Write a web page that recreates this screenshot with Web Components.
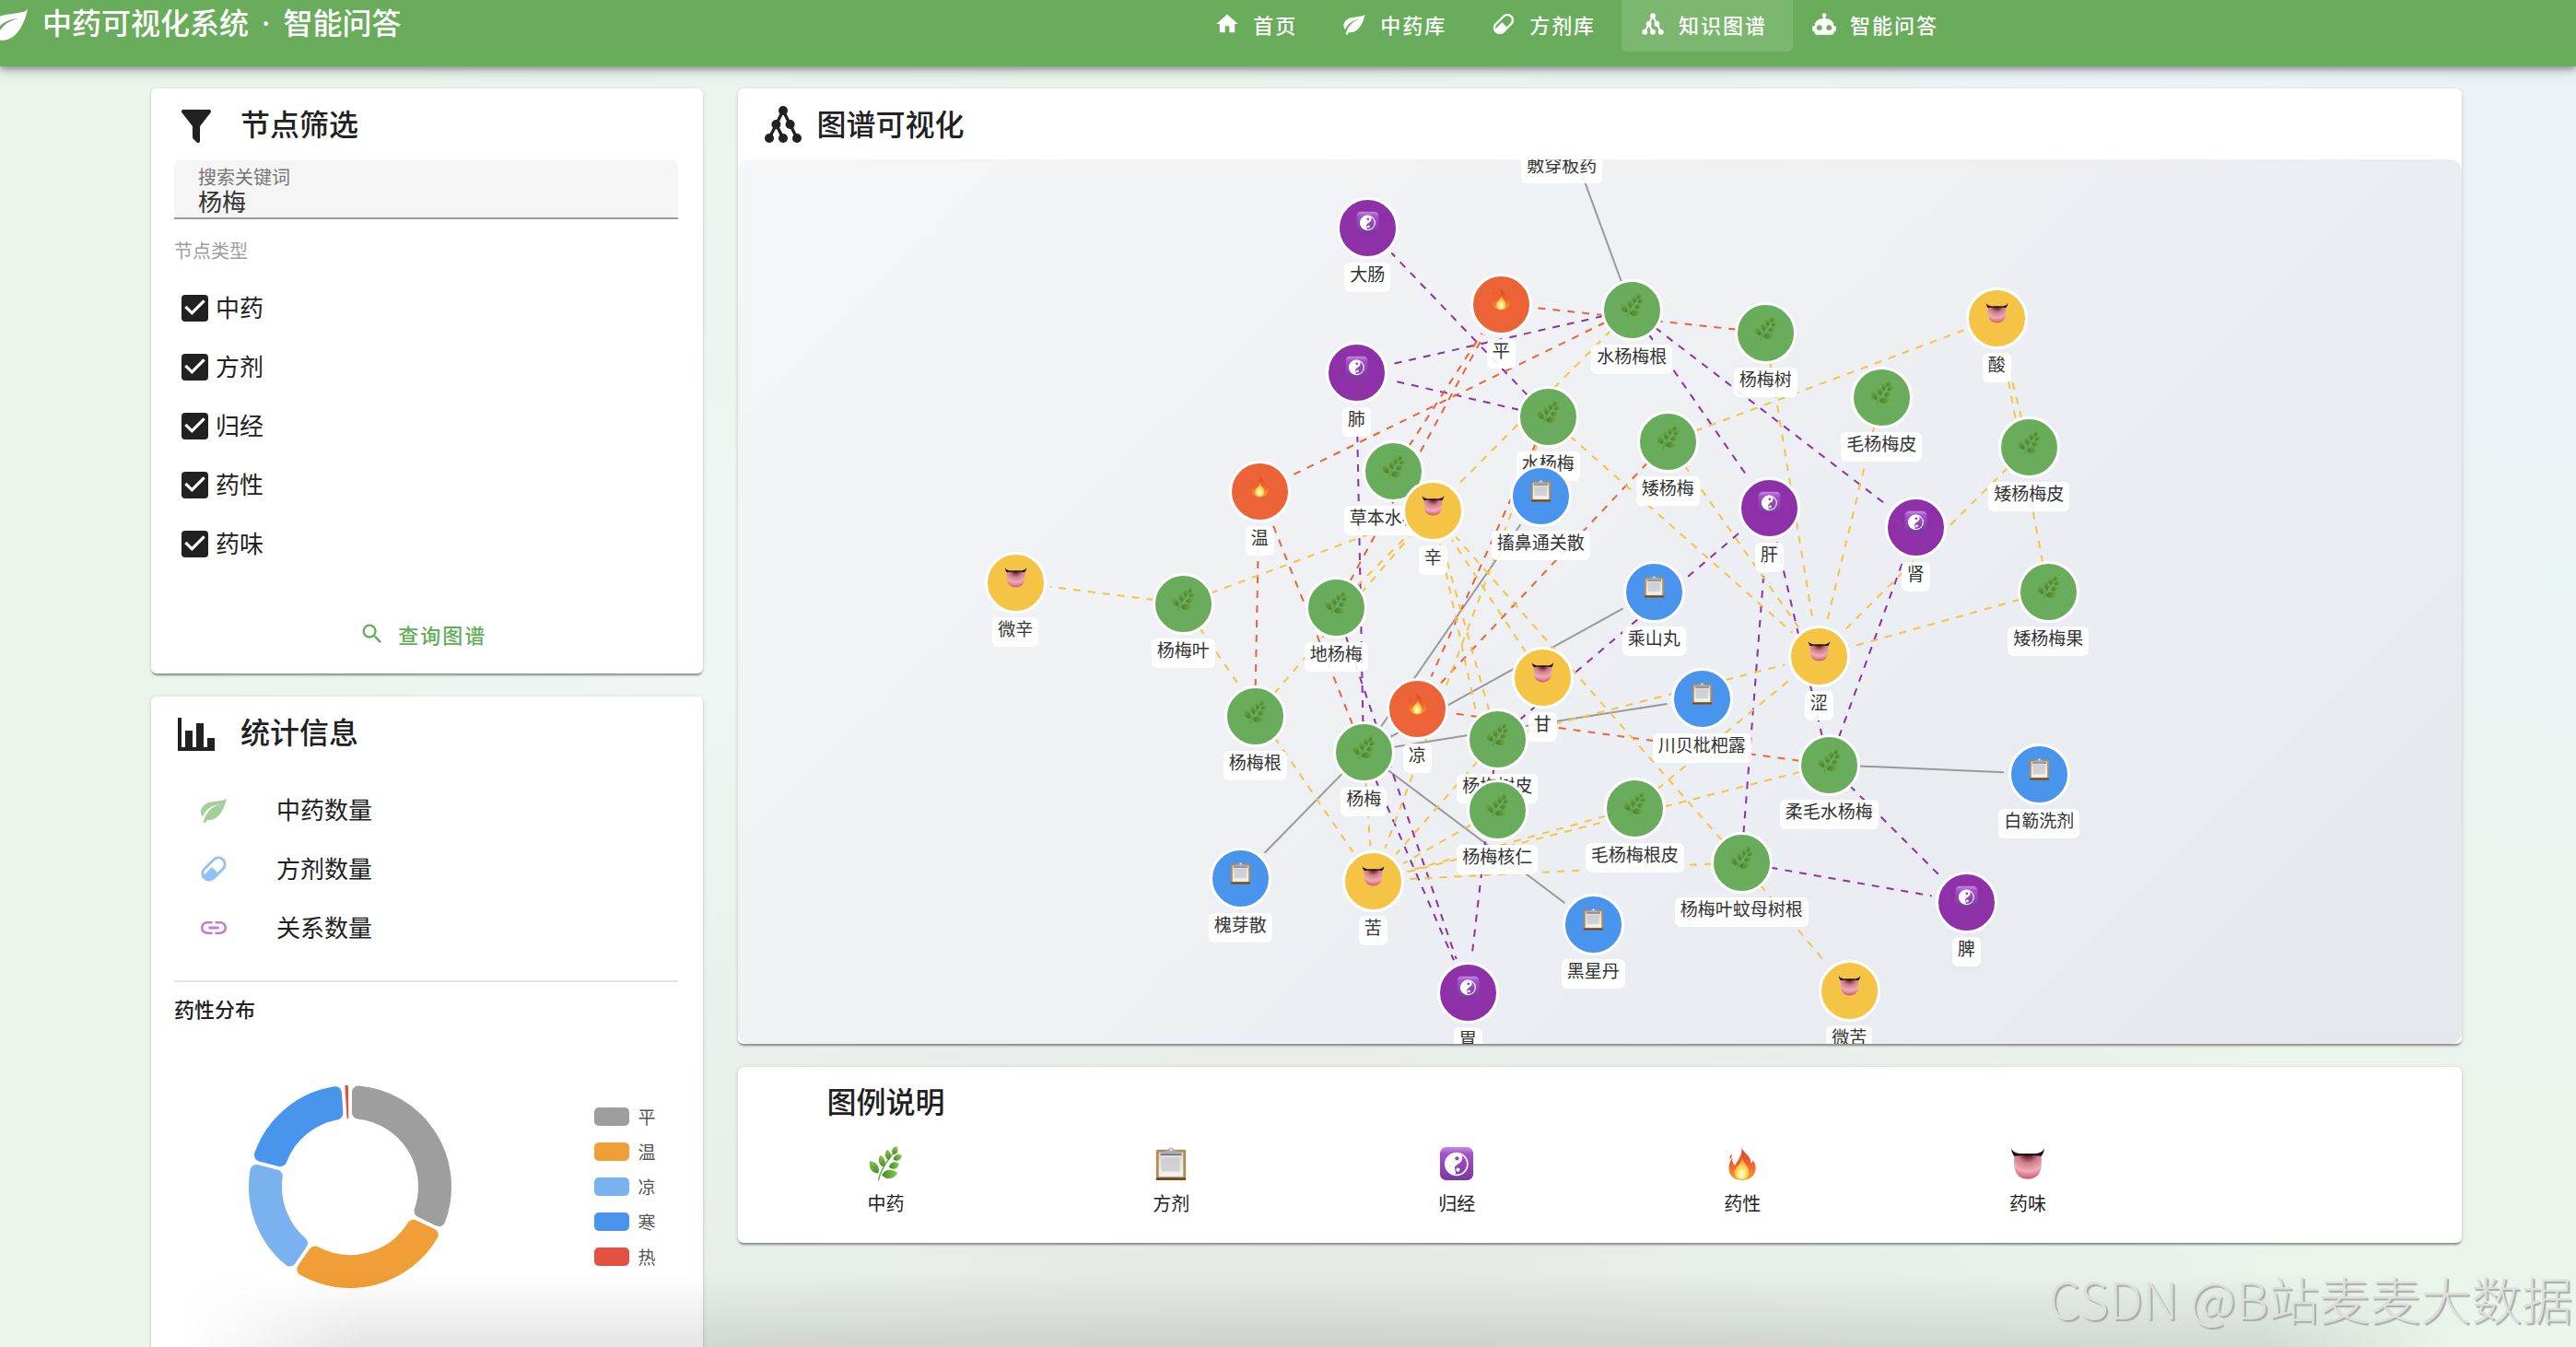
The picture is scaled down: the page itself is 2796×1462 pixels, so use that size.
<!DOCTYPE html>
<html lang="zh-CN">
<head>
<meta charset="utf-8">
<title>中药可视化系统 · 知识图谱</title>
<style>
  html, body { height: 100%; }
  body { margin: 0; font-family: "Noto Sans CJK SC", sans-serif; color: #212121; }
</style>
</head>
<body>
<tcm-app></tcm-app>

<script>
const ICONS = {
  home: 'M10,20V14H14V20H19V12H22L12,3L2,12H5V20H10Z',
  leaf: 'M17,8C8,10 5.9,16.17 3.82,21.34L5.71,22L6.66,19.7C7.14,19.87 7.64,20 8,20C19,20 22,3 22,3C21,5 14,5.25 9,6.25C4,7.25 2,11.5 2,13.5C2,15.5 3.75,17.25 3.75,17.25C7,8 17,8 17,8Z',
  pill: 'M4.22,11.29L11.29,4.22C13.64,1.88 17.43,1.88 19.78,4.22C22.12,6.56 22.12,10.36 19.78,12.71L12.71,19.78C10.36,22.12 6.56,22.12 4.22,19.78C1.88,17.43 1.88,13.64 4.22,11.29M5.64,12.71C4.59,13.75 4.24,15.24 4.6,16.57L10.59,10.59L14.83,14.83L18.36,11.29C19.93,9.73 19.93,7.2 18.36,5.64C16.8,4.07 14.27,4.07 12.71,5.64L5.64,12.71Z',
  robot: 'M12,2A2,2 0 0,1 14,4C14,4.74 13.6,5.39 13,5.73V7H14A7,7 0 0,1 21,14H22A1,1 0 0,1 23,15V18A1,1 0 0,1 22,19H21V20A2,2 0 0,1 19,22H5A2,2 0 0,1 3,20V19H2A1,1 0 0,1 1,18V15A1,1 0 0,1 2,14H3A7,7 0 0,1 10,7H11V5.73C10.4,5.39 10,4.74 10,4A2,2 0 0,1 12,2M7.5,13A2.5,2.5 0 0,0 5,15.5A2.5,2.5 0 0,0 7.5,18A2.5,2.5 0 0,0 10,15.5A2.5,2.5 0 0,0 7.5,13M16.5,13A2.5,2.5 0 0,0 14,15.5A2.5,2.5 0 0,0 16.5,18A2.5,2.5 0 0,0 19,15.5A2.5,2.5 0 0,0 16.5,13Z',
  filter: 'M14,12V19.88C14.04,20.18 13.94,20.5 13.71,20.71C13.32,21.1 12.69,21.1 12.3,20.71L10.29,18.7C10.06,18.47 9.96,18.16 10,17.87V12H9.97L4.21,4.62C3.87,4.19 3.95,3.56 4.38,3.22C4.57,3.08 4.78,3 5,3H19C19.22,3 19.43,3.08 19.62,3.22C20.05,3.56 20.13,4.19 19.79,4.62L14.03,12H14Z',
  chart: 'M22,21H2V3H4V19H6V10H10V19H12V6H16V19H18V14H22V21Z',
  link: 'M3.9,12C3.9,10.29 5.29,8.9 7,8.9H11V7H7A5,5 0 0,0 2,12A5,5 0 0,0 7,17H11V15.1H7C5.29,15.1 3.9,13.71 3.9,12M8,13H16V11H8V13M17,7H13V8.9H17C18.71,8.9 20.1,10.29 20.1,12C20.1,13.71 18.71,15.1 17,15.1H13V17H17A5,5 0 0,0 22,12A5,5 0 0,0 17,7Z',
  search: 'M9.5,3A6.5,6.5 0 0,1 16,9.5C16,11.11 15.41,12.59 14.44,13.73L14.71,14H15.5L20.5,19L19,20.5L14,15.5V14.71L13.73,14.44C12.59,15.41 11.11,16 9.5,16A6.5,6.5 0 0,1 3,9.5A6.5,6.5 0 0,1 9.5,3M9.5,5C7,5 5,7 5,9.5C5,12 7,14 9.5,14C12,14 14,12 14,9.5C14,7 12,5 9.5,5Z'
};
const TREE = `<g fill="currentColor"><circle cx="12" cy="4.5" r="2.5"/><circle cx="8.2" cy="12" r="2.5"/><circle cx="15.8" cy="12" r="2.5"/><circle cx="4.5" cy="19.5" r="2.5"/><circle cx="12" cy="19.5" r="2.5"/><circle cx="19.5" cy="19.5" r="2.5"/></g><path d="M12 4.5L4.5 19.5M12 4.5L19.5 19.5M8.2 12L12 19.5" fill="none" stroke="currentColor" stroke-width="1.7"/>`;

const leaf = (x, y, rx, ry, a) =>
  `<path transform="translate(${x} ${y}) rotate(${a})" d="M0 ${-ry}C${rx * 1.5} ${-ry * .4} ${rx * 1.4} ${ry * .6} 0 ${ry}C${-rx * 1.4} ${ry * .6} ${-rx * 1.5} ${-ry * .4} 0 ${-ry}Z" fill="url(#g)"/>`;
const EMOJI = {
  herb: `<linearGradient id="g" x1="0" y1="0" x2="0" y2="1"><stop offset="0" stop-color="#8fcb4b"/><stop offset="1" stop-color="#43892f"/></linearGradient>
    <path d="M12 39C15 26 22 16 30 7" fill="none" stroke="#6fae42" stroke-width="1.6"/>
    ${leaf(31, 5, 3, 5, 22)}${leaf(23, 10, 3, 6, -8)}${leaf(34, 13, 3, 5.5, 62)}${leaf(16, 17, 3.2, 7, -16)}${leaf(30, 22, 3.6, 6, 72)}${leaf(7, 24, 4, 8.5, -34)}${leaf(25, 32, 4.6, 9, 84)}`,
  clip: `<linearGradient id="g" x1="0" y1="0" x2="0" y2="1"><stop offset="0" stop-color="#d9dadc"/><stop offset="1" stop-color="#f3f3f3"/></linearGradient>
    <rect x="3" y="4" width="34" height="35" rx="2" fill="#b48a4e"/><rect x="3" y="36" width="34" height="3" rx="1" fill="#6d4b20"/>
    <rect x="6" y="7" width="28" height="28" fill="url(#g)"/><rect x="9" y="13" width="21" height="16" fill="#c6c7c9" opacity=".7"/>
    <path d="M8 9V6.500L15 5.500C17 5 17 1.500 20 1.500S23 5 25 5.500L32 6.500V9Z" fill="#a9aeb4"/><rect x="8" y="9" width="24" height="1.500" fill="#5f6367"/><circle cx="20" cy="4" r="1.200" fill="#fff"/>`,
  yin: `<linearGradient id="g" x1="0" y1="0" x2="0" y2="1"><stop offset="0" stop-color="#c88be6"/><stop offset=".2" stop-color="#a552cc"/><stop offset="1" stop-color="#7c379f"/></linearGradient>
    <rect x="1" y="1" width="38" height="38" rx="7" fill="url(#g)"/><circle cx="20" cy="20.500" r="12.500" fill="none" stroke="#fff" stroke-width="1.800"/>
    <path d="M22 8A12.500 12.500 0 1 0 16 32.500C22 32 17 27 18 24C20 20 26 20 26.500 14C26.600 10.500 24.500 8.500 22 8Z" fill="#fff"/>
    <circle cx="20.500" cy="14" r="2.200" fill="#8e44b4"/><circle cx="21.500" cy="27" r="2.200" fill="#fff"/>`,
  fire: `<linearGradient id="g" x1="0" y1="0" x2="0" y2="1"><stop offset="0" stop-color="#dd3f2c"/><stop offset=".6" stop-color="#f06a2e"/><stop offset="1" stop-color="#f5a13a"/></linearGradient>
    <radialGradient id="h" cx=".5" cy=".75" r=".6"><stop offset="0" stop-color="#fffef0"/><stop offset=".5" stop-color="#fbe25a"/><stop offset="1" stop-color="#f79b38"/></radialGradient>
    <path d="M19 1C20 7 30 10 30 19C31 20 32 18 32 16C35 19 36 24 35 28C34 35 27 39 20 39C12 39 6 35 5 28C4 22 6 17 9 13C8 18 10 21 12 22C14 16 21 12 19 1Z" fill="url(#g)"/>
    <path d="M8 9C9 11 8 13 6 15C5 12 7 11 8 9Z" fill="#e4543a"/>
    <path d="M20 13C21 20 27 21 28 29C28 35 25 38 20 38C15 38 11 35 11 30C11 24 19 22 20 13Z" fill="url(#h)"/>`,
  tongue: `<radialGradient id="g" cx=".5" cy="0" r="1"><stop offset="0" stop-color="#3a1518"/><stop offset=".15" stop-color="#6d2f38"/><stop offset=".38" stop-color="#d07c89"/><stop offset=".7" stop-color="#efabb6"/><stop offset="1" stop-color="#cf5870"/></radialGradient>
    <path d="M4.500 10C3.500 25 5 37.500 20 37.500S36.500 25 35.500 10C28 8 12 8 4.500 10Z" fill="url(#g)"/>
    <path d="M1 3C4 8 10 9 20 9S36 8 39 3C38 8 37 10 35 11.500C30 10 24 11 20 11S10 10 5 11.500C3 10 2 8 1 3Z" fill="#1b1214"/>`
};

const define = (name, render) => customElements.define(name, class extends HTMLElement {
  connectedCallback() {
    if (this.shadowRoot) return;
    this.attachShadow({ mode: 'open' }).innerHTML = render(this);
  }
});

define('md-icon', el => {
  const n = el.getAttribute('name');
  return `<style>:host{display:block;flex:none;width:var(--icon-size,28px);height:var(--icon-size,28px)}svg{display:block;width:100%;height:100%}</style>
  <svg viewBox="0 0 24 24" aria-hidden="true">${n === 'tree' ? TREE : `<path fill="currentColor" d="${ICONS[n]}"/>`}</svg>`;
});

define('emoji-icon', el =>
  `<style>:host{display:block;flex:none;width:var(--emoji-size,38px);height:var(--emoji-size,38px)}svg{display:block;width:100%;height:100%}</style>
  <svg viewBox="0 0 40 40" aria-hidden="true">${EMOJI[el.getAttribute('name')]}</svg>`);

define('nav-item', el =>
  `<style>
    :host{display:block}
    a{box-sizing:border-box;display:flex;align-items:center;gap:14px;height:56px;padding:0 28px 4px 20px;border-radius:0 0 6px 6px;color:#fff;text-decoration:none;font-size:22px;font-weight:500;letter-spacing:.09em;line-height:32px}
    :host([active]) a{background:rgba(255,255,255,.12)}
  </style>
  <a href="#${el.getAttribute('icon')}"><md-icon name="${el.getAttribute('icon')}"></md-icon><span><slot></slot></span></a>`);

define('app-header', () =>
  `<style>
    :host{display:block;position:relative;z-index:2;background:#69ad5c;color:#fff;box-shadow:0 3px 6px rgba(0,0,0,.3),0 5px 14px rgba(0,0,0,.18)}
    .bar{box-sizing:border-box;display:grid;grid-template-columns:1fr auto;align-items:start;height:72px;padding-right:23.75%}
    .brand{display:flex;align-items:center;gap:12px;height:56px;margin-left:-14px;--icon-size:48px}
    h1{margin:0;padding-bottom:10px;font-size:32px;font-weight:500;line-height:46px;white-space:nowrap}
    h1 span{margin:0 6px;font-family:"Noto Sans",sans-serif;line-height:1}
    nav{display:flex}
  </style>
  <div class="bar">
    <div class="brand"><md-icon name="leaf"></md-icon><h1>中药可视化系统<span> · </span>智能问答</h1></div>
    <nav>
      <nav-item icon="home">首页</nav-item>
      <nav-item icon="leaf">中药库</nav-item>
      <nav-item icon="pill">方剂库</nav-item>
      <nav-item icon="tree" active>知识图谱</nav-item>
      <nav-item icon="robot">智能问答</nav-item>
    </nav>
  </div>`);

define('panel-card', el => {
  const icon = el.getAttribute('icon');
  return `<style>
    :host{display:block;background:#fff;border-radius:6px;box-shadow:0 3px 2px -1px rgba(0,0,0,.35),0 1px 4px rgba(0,0,0,.16)}
    header{box-sizing:border-box;display:flex;align-items:center;gap:var(--head-gap,24px);height:var(--head-height,78px);padding:0 25px;--icon-size:48px}
    h2{margin:0;font-size:32px;font-weight:500;line-height:44px;padding-bottom:4px}
    md-icon{padding-top:var(--icon-drop,4px)}
  </style>
  <header>${icon ? `<md-icon name="${icon}"></md-icon>` : ''}<h2>${el.getAttribute('heading')}</h2></header>
  <slot></slot>`;
});

define('search-field', el =>
  `<style>
    :host{display:block}
    div{box-sizing:border-box;display:flex;flex-direction:column;height:64px;padding:7px 26px 0;background:#f5f5f5;border-bottom:2px solid #9a9a9a;border-radius:6px 6px 0 0}
    label{font-size:20px;line-height:22px;color:#757575}
    input{font:inherit;font-size:26px;line-height:30px;height:30px;width:100%;margin:0;padding:0;border:0;outline:0;background:none;color:#333}
  </style>
  <div><label for="q">${el.getAttribute('label')}</label><input id="q" type="text" value="${el.getAttribute('value')}"></div>`);

define('check-row', () =>
  `<style>
    :host{display:block}
    label{display:flex;align-items:center;gap:8px;height:64px;padding-left:8px;font-size:26px;line-height:36px}
    input{appearance:none;flex:none;width:29px;height:29px;margin:0;border:3px solid #212121;border-radius:4px}
    input:checked{background:#212121;border:0}
    input:checked::before{content:"";display:block;width:100%;height:100%;background:#fff;clip-path:polygon(39% 78%,11% 50%,19% 42%,39% 62%,81% 20%,89% 28%)}
    span{padding-bottom:3px}
  </style>
  <label><input type="checkbox" checked><span><slot></slot></span></label>`);

define('stat-row', el =>
  `<style>
    :host{display:flex;align-items:center;gap:51px;height:64px;padding-left:26px;font-size:26px;line-height:36px}
    md-icon{--icon-size:34px;color:${el.getAttribute('tint')}}
    span{padding-bottom:3px}
  </style>
  <md-icon name="${el.getAttribute('icon')}"></md-icon><span><slot></slot></span>`);

/* Ring of rounded sectors: each is drawn inset by its corner radius and
   stroked with round joins, so the edges come out parallel to the gap. */
define('nature-chart', () => {
  const data = [
    ['平', 0, 115.5, '#9e9e9e', 7], ['温', 115.5, 214.5, '#f09e38', 7], ['凉', 214.5, 284.5, '#79b2ef', 7],
    ['寒', 284.5, 356, '#4994ec', 7], ['热', 356, 360, '#e15241', .9]
  ];
  const RO = 110, RI = 74, GAP = 2;
  const pt = (r, a) => `${(r * Math.sin(a)).toFixed(2)} ${(-r * Math.cos(a)).toFixed(2)}`;
  const arc = ([, a0, a1, color, c]) => {
    const s = a0 * Math.PI / 180, e = a1 * Math.PI / 180, o = RO - c, i = RI + c;
    const od = (GAP + c) / o, id = Math.min((GAP + c) / i, (e - s) / 2);
    const big = e - s > Math.PI ? 1 : 0;
    return `<path d="M${pt(o, s + od)}A${o} ${o} 0 ${big} 1 ${pt(o, e - od)}L${pt(i, e - id)}A${i} ${i} 0 ${big} 0 ${pt(i, s + id)}Z" fill="${color}" stroke="${color}" stroke-width="${c * 2}" stroke-linejoin="round"/>`;
  };
  return `<style>
    :host{display:grid;grid-template-columns:7fr 3fr;align-items:center;height:320px}
    svg{display:block;width:224px;height:224px;justify-self:center}
    ul{list-style:none;margin:0;padding:0 24px 0 0;justify-self:end}
    li{display:flex;align-items:center;gap:9px;height:38px;font-size:19px;line-height:28px;color:#555}
    i{width:38px;height:20px;border-radius:5px}
  </style>
  <svg viewBox="-112 -112 224 224" role="img" aria-label="药性分布">${data.map(arc).join('')}</svg>
  <ul>${data.map(d => `<li><i style="background:${d[3]}"></i><span>${d[0]}</span></li>`).join('')}</ul>`;
});

define('graph-node', el =>
  `<style>
    :host{position:absolute;display:flex;flex-direction:column;align-items:center;gap:4px;width:240px;margin:-33px 0 0 -120px;pointer-events:none}
    .dot{box-sizing:border-box;display:flex;justify-content:center;width:67px;height:67px;padding-top:12px;border:3px solid #fff;border-radius:50%;background:var(--fill);--emoji-size:25px}
    .dot[data-kind=herb] emoji-icon{opacity:.8;filter:brightness(.85)}
    .dot[data-kind=herb]{--emoji-size:27px}
    span{padding:0 6px 8px;border-radius:6px;background:rgba(255,255,255,.9);color:#333;font-size:19px;line-height:24px;white-space:nowrap}
  </style>
  <div class="dot" data-kind="${el.getAttribute('kind')}"><emoji-icon name="${el.getAttribute('kind')}"></emoji-icon></div><span><slot></slot></span>`);

define('knowledge-graph', () => {
  const fill = { herb: '#69ad5c', clip: '#4994ec', yin: '#8e31a9', fire: '#ec6337', tongue: '#f5c444' };
  const line = { clip: '#999', yin: '#8e31a9', fire: '#ec6337', tongue: '#f5c444' };
  /* name, kind, x, y on the 1872 x 960 stage */
  const nodes = [
    ['敷穿板药', 'clip', 895, -44], ['水杨梅根', 'herb', 971, 163], ['杨梅树', 'herb', 1116, 188], ['毛杨梅皮', 'herb', 1242, 258],
    ['水杨梅', 'herb', 880, 279], ['矮杨梅', 'herb', 1010, 306], ['矮杨梅皮', 'herb', 1402, 312], ['矮杨梅果', 'herb', 1423, 469],
    ['草本水杨梅', 'herb', 712, 338], ['杨梅叶', 'herb', 484, 482], ['地杨梅', 'herb', 650, 486], ['杨梅根', 'herb', 562, 604],
    ['杨梅', 'herb', 680, 643], ['杨梅树皮', 'herb', 825, 629], ['杨梅核仁', 'herb', 825, 706], ['毛杨梅根皮', 'herb', 974, 704],
    ['柔毛水杨梅', 'herb', 1185, 657], ['杨梅叶蚊母树根', 'herb', 1090, 763],
    ['大肠', 'yin', 684, 74], ['肺', 'yin', 672, 231], ['肝', 'yin', 1120, 378], ['肾', 'yin', 1279, 399], ['脾', 'yin', 1334, 806], ['胃', 'yin', 793, 904],
    ['平', 'fire', 829, 157], ['温', 'fire', 567, 360], ['凉', 'fire', 738, 596],
    ['酸', 'tongue', 1367, 172], ['辛', 'tongue', 755, 381], ['微辛', 'tongue', 302, 459], ['甘', 'tongue', 874, 562], ['涩', 'tongue', 1174, 539],
    ['苦', 'tongue', 690, 783], ['微苦', 'tongue', 1207, 902],
    ['搐鼻通关散', 'clip', 872, 365], ['乘山丸', 'clip', 995, 469], ['川贝枇杷露', 'clip', 1047, 585], ['槐芽散', 'clip', 546, 780],
    ['黑星丹', 'clip', 929, 830], ['白簕洗剂', 'clip', 1413, 667]
  ];
  const edges = `敷穿板药-水杨梅根 搐鼻通关散-杨梅 乘山丸-杨梅 川贝枇杷露-杨梅 槐芽散-杨梅 黑星丹-杨梅 白簕洗剂-柔毛水杨梅
    大肠-水杨梅 肺-水杨梅根 肺-水杨梅 肺-杨梅 肝-水杨梅根 肾-水杨梅根 肝-杨梅树皮 肝-杨梅叶蚊母树根 肝-柔毛水杨梅 肾-柔毛水杨梅 脾-柔毛水杨梅 脾-杨梅叶蚊母树根 胃-地杨梅 胃-杨梅 胃-杨梅树皮
    平-杨梅树 温-水杨梅根 平-草本水杨梅 平-地杨梅 温-杨梅根 温-杨梅 凉-矮杨梅 凉-水杨梅 凉-柔毛水杨梅
    辛-水杨梅根 苦-水杨梅 涩-水杨梅 涩-矮杨梅 涩-杨梅树 涩-毛杨梅皮 涩-矮杨梅皮 涩-矮杨梅果 酸-矮杨梅 酸-矮杨梅皮 酸-矮杨梅果
    微辛-杨梅叶 辛-杨梅叶 苦-杨梅叶 辛-地杨梅 辛-杨梅根 辛-杨梅树皮 辛-杨梅核仁 辛-甘 辛-杨梅叶蚊母树根 涩-杨梅树皮 涩-毛杨梅根皮
    苦-杨梅 苦-杨梅树皮 苦-杨梅核仁 苦-毛杨梅根皮 苦-柔毛水杨梅 苦-杨梅叶蚊母树根 微苦-杨梅叶蚊母树根`.trim().split(/\s+/);
  const at = Object.fromEntries(nodes.map(n => [n[0], n]));
  const R = 38;
  const lines = edges.map(e => {
    const [s, t] = e.split('-').map(k => at[k]);
    const dx = s[2] - t[2], dy = s[3] - t[3], d = Math.hypot(dx, dy);
    const x = t[2] + dx / d * 32, y = t[3] + dy / d * 32;
    const u = s[2] - dx / d * R, v = s[3] - dy / d * R;
    return `<line x1="${x.toFixed(1)}" y1="${y.toFixed(1)}" x2="${u.toFixed(1)}" y2="${v.toFixed(1)}" stroke="${line[s[1]]}"${s[1] === 'clip' ? '' : ' stroke-dasharray="8 8"'}/>`;
  }).join('');
  return `<style>
    :host{display:flex;justify-content:center;height:960px;overflow:hidden;border-radius:13px;background:linear-gradient(135deg,#f5f6fa,#e4e8ec)}
    .stage{position:relative;flex:none;width:1872px;height:960px}
    svg{position:absolute;inset:0;width:100%;height:100%;stroke-width:2}
  </style>
  <div class="stage"><svg viewBox="0 0 1872 960" aria-hidden="true">${lines}</svg>
  ${nodes.map(n => `<graph-node kind="${n[1]}" style="left:${n[2]}px;top:${n[3]}px;--fill:${fill[n[1]]}">${n[0]}</graph-node>`).join('')}</div>`;
});

define('legend-item', el =>
  `<style>:host{display:flex;flex-direction:column;align-items:center;gap:10px;font-size:20px;line-height:28px}</style>
  <emoji-icon name="${el.getAttribute('kind')}"></emoji-icon><span><slot></slot></span>`);

define('legend-panel', () =>
  `<style>
    :host{display:block;background:#fff;border-radius:6px;box-shadow:0 3px 2px -1px rgba(0,0,0,.35),0 1px 4px rgba(0,0,0,.16)}
    h2{margin:0;padding:14px 97px 20px;font-size:32px;font-weight:500;line-height:44px}
    .row{display:grid;grid-template-columns:repeat(6,1fr);padding:8px 6px 29px}
  </style>
  <h2>图例说明</h2>
  <div class="row">
    <legend-item kind="herb">中药</legend-item>
    <legend-item kind="clip">方剂</legend-item>
    <legend-item kind="yin">归经</legend-item>
    <legend-item kind="fire">药性</legend-item>
    <legend-item kind="tongue">药味</legend-item>
  </div>`);

define('tcm-app', () =>
  `<style>
    :host{display:block;position:relative;height:100vh;overflow:hidden;
      background:
        radial-gradient(ellipse 34% 45% at 82% 4%,#edf3f9,transparent),
        radial-gradient(ellipse 24% 60% at 100% 22%,#eaf2f7,transparent),
        radial-gradient(ellipse 40% 60% at 50% 100%,rgba(229,231,229,.9),transparent),
        radial-gradient(ellipse 20% 50% at 28% 45%,rgba(240,246,245,.9),transparent),
        #eaf4eb}
    main{display:grid;grid-template-columns:1fr 3fr;padding:24px 105px 0 145px}
    .col{display:flex;flex-direction:column;gap:25px;padding:0 19px;min-width:0}
    .pad{padding:0 27px 0 25px}
    .hint{margin:16px 0 12px;font-size:20px;line-height:36px;color:#9e9e9e}
    .actions{display:flex;justify-content:center;padding:38px 0 13px}
    button{display:flex;align-items:center;gap:14px;height:58px;padding:0 26px 2px 20px;border:0;background:none;color:#5fae58;font:inherit;font-size:22px;font-weight:500;letter-spacing:.09em}
    .stats{padding-top:13px;padding-bottom:64px}
    hr{margin:25px 0 12px;border:0;border-top:2px solid #e4e4e4}
    h3{margin:0 0 18px;font-size:22px;font-weight:500;line-height:32px}
    .graph{--head-gap:13px;--icon-drop:0;--head-height:77px}
    .dock{position:absolute;left:7%;right:5%;bottom:0;height:80px;background:linear-gradient(transparent,rgba(0,0,0,.1));-webkit-mask:linear-gradient(90deg,transparent,#000 8%,#000 92%,transparent);pointer-events:none}
    .mark{position:absolute;right:4px;bottom:14px;margin:0;font-size:55px;font-weight:300;line-height:80px;color:#dcdfdc;text-shadow:2px 2px 1px #a9ada9;white-space:nowrap;pointer-events:none}
  </style>
  <app-header></app-header>
  <main>
    <div class="col">
      <panel-card icon="filter" heading="节点筛选">
        <div class="pad">
          <search-field label="搜索关键词" value="杨梅"></search-field>
          <p class="hint">节点类型</p>
          <check-row>中药</check-row>
          <check-row>方剂</check-row>
          <check-row>归经</check-row>
          <check-row>药性</check-row>
          <check-row>药味</check-row>
          <div class="actions"><button type="button"><md-icon name="search"></md-icon><span>查询图谱</span></button></div>
        </div>
      </panel-card>
      <panel-card icon="chart" heading="统计信息">
        <div class="pad stats">
          <stat-row icon="leaf" tint="#a5ce9d">中药数量</stat-row>
          <stat-row icon="pill" tint="#93c0f5">方剂数量</stat-row>
          <stat-row icon="link" tint="#c27ed4">关系数量</stat-row>
          <hr>
          <h3>药性分布</h3>
          <nature-chart></nature-chart>
        </div>
      </panel-card>
    </div>
    <div class="col">
      <panel-card class="graph" icon="tree" heading="图谱可视化"><knowledge-graph></knowledge-graph></panel-card>
      <legend-panel></legend-panel>
    </div>
  </main>
  <div class="dock"></div>
  <p class="mark">CSDN @B站麦麦大数据</p>`);
</script>
</body>
</html>
